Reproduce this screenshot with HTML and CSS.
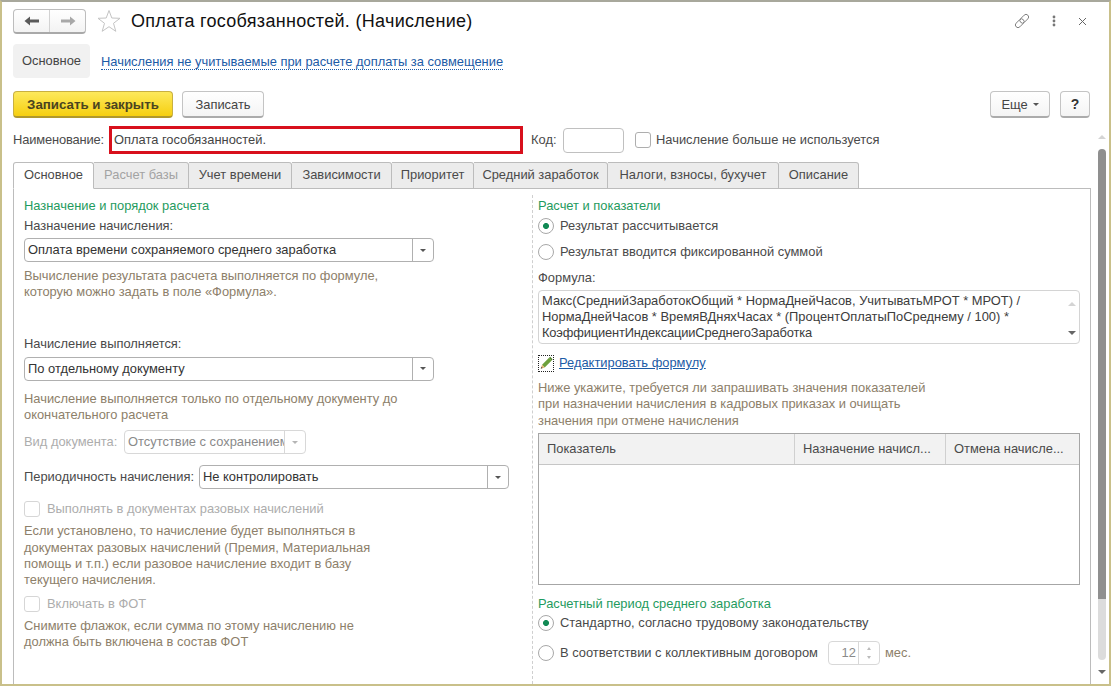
FILE: index.html
```html
<!DOCTYPE html>
<html lang="ru">
<head>
<meta charset="utf-8">
<title>Оплата гособязанностей. (Начисление)</title>
<link rel="stylesheet" href="styles.css">
</head>
<body>
<div class="window">
  <header class="titlebar">
    <div class="navgroup">
      <button class="navbtn">
        <svg width="16" height="12" viewBox="0 0 16 12"><path d="M0.5 6 L6 1.5 V4.5 H15 V7.5 H6 V10.5 Z" fill="#5a5a5a"/></svg>
      </button>
      <button class="navbtn navbtn-next">
        <svg width="16" height="12" viewBox="0 0 16 12"><path d="M15.5 6 L10 1.5 V4.5 H1 V7.5 H10 V10.5 Z" fill="#a8a8a8"/></svg>
      </button>
    </div>
    <svg class="star" width="24" height="24" viewBox="0 0 24 24"><path d="M12 1.5 L14.8 9 L23 9.3 L16.5 14.3 L18.8 22.3 L12 17.7 L5.2 22.3 L7.5 14.3 L1 9.3 L9.2 9 Z" fill="none" stroke="#c4c4c4" stroke-width="1"/></svg>
    <h1 class="title">Оплата гособязанностей. (Начисление)</h1>
    <div class="winicons">
      <svg width="16" height="16" viewBox="0 0 16 16"><g fill="none" stroke="#808080" stroke-width="1"><path d="M6.66 5.66 L10.16 2.16 A2.6 2.6 0 0 1 13.84 5.84 L10.34 9.34 A2.6 2.6 0 0 1 6.66 5.66"/><path d="M9.34 10.34 L5.84 13.84 A2.6 2.6 0 0 1 2.16 10.16 L5.66 6.66 A2.6 2.6 0 0 1 9.34 10.34"/></g></svg>
      <svg width="4" height="12" viewBox="0 0 4 12"><g fill="#777"><circle cx="2" cy="2" r="1.4"/><circle cx="2" cy="6" r="1.4"/><circle cx="2" cy="10" r="1.4"/></g></svg>
      <svg width="9" height="9" viewBox="0 0 9 9"><path d="M1 1 L8 8 M8 1 L1 8" stroke="#666" stroke-width="1" fill="none"/></svg>
    </div>
  </header>

  <nav class="sections">
    <span class="section-active">Основное</span>
    <a class="section-link">Начисления не учитываемые при расчете доплаты за совмещение</a>
  </nav>

  <div class="commandbar">
    <button class="btn btn-primary">Записать и закрыть</button>
    <button class="btn btn-save">Записать</button>
    <span class="spacer"></span>
    <button class="btn btn-more">Еще <i class="caret"></i></button>
    <button class="btn btn-help">?</button>
  </div>

  <div class="body">
    <main class="main">
      <div class="namerow">
        <label class="name-label">Наименование:</label>
        <div class="name-input">Оплата гособязанностей.</div>
        <label class="code-label">Код:</label>
        <div class="code-input"></div>
        <span class="check"></span>
        <span class="check-text">Начисление больше не используется</span>
      </div>

      <div class="tabs">
        <span class="tab tab-active t1">Основное</span>
        <span class="tab tab-disabled t2">Расчет базы</span>
        <span class="tab t3">Учет времени</span>
        <span class="tab t4">Зависимости</span>
        <span class="tab t5">Приоритет</span>
        <span class="tab t6">Средний заработок</span>
        <span class="tab t7">Налоги, взносы, бухучет</span>
        <span class="tab t8">Описание</span>
      </div>

      <div class="page">
        <section class="col-left">
          <div class="line green m1">Назначение и порядок расчета</div>
          <div class="line m4">Назначение начисления:</div>
          <div class="select select-wide m4"><span class="select-val">Оплата времени сохраняемого среднего заработка</span><span class="select-btn"><i class="caret"></i></span></div>
          <p class="hint m6">Вычисление результата расчета выполняется по формуле,<br>которую можно задать в поле «Формула».</p>
          <div class="line m35">Начисление выполняется:</div>
          <div class="select select-wide m5"><span class="select-val">По отдельному документу</span><span class="select-btn"><i class="caret"></i></span></div>
          <p class="hint m10">Начисление выполняется только по отдельному документу до<br>окончательного расчета</p>
          <div class="field-row m7">
            <span class="disabled doc-label">Вид документа:</span>
            <div class="select select-doc select-off"><span class="select-val">Отсутствие с сохранением</span><span class="select-btn"><i class="caret"></i></span></div>
          </div>
          <div class="field-row m11">
            <span class="period-label">Периодичность начисления:</span>
            <div class="select select-period"><span class="select-val">Не контролировать</span><span class="select-btn"><i class="caret"></i></span></div>
          </div>
          <div class="check-row m12"><span class="check check-off"></span><span class="disabled">Выполнять в документах разовых начислений</span></div>
          <p class="hint m6">Если установлено, то начисление будет выполняться в<br>документах разовых начислений (Премия, Материальная<br>помощь и т.п.) если разовое начисление входит в базу<br>текущего начисления.</p>
          <div class="check-row m7"><span class="check check-off"></span><span class="disabled">Включать в ФОТ</span></div>
          <p class="hint m6">Снимите флажок, если сумма по этому начислению не<br>должна быть включена в состав ФОТ</p>
        </section>

        <section class="col-right">
          <div class="line green m1">Расчет и показатели</div>
          <div class="radio-row m4"><span class="radio radio-on"></span>Результат рассчитывается</div>
          <div class="radio-row m10"><span class="radio"></span>Результат вводится фиксированной суммой</div>
          <div class="line m10">Формула:</div>
          <div class="formula m4">
            <div class="formula-text"><div>Макс(СреднийЗаработокОбщий * НормаДнейЧасов, УчитыватьМРОТ * МРОТ) /</div><div>НормаДнейЧасов * ВремяВДняхЧасах * (ПроцентОплатыПоСреднему / 100) *</div><div class="fl3">КоэффициентИндексацииСреднегоЗаработка</div></div>
            <div class="formula-scroll"><i class="tri-up"></i><i class="tri-down"></i></div>
          </div>
          <div class="edit-row m11">
            <span class="pencil"><svg width="16" height="16" viewBox="0 0 16 16"><path d="M3.5 10 L11.5 2 L14.5 5 L6.5 13 Z" fill="#6da03c"/><path d="M11.5 2 L12.8 0.8 L15.5 3.6 L14.5 5 Z" fill="#4f7d2a"/><path d="M3.5 10 L6.5 13 L2 14.5 Z" fill="#e0b070"/><path d="M2.8 12.4 L4 13.7 L2 14.5 Z" fill="#444"/></svg></span>
            <a class="edit-link">Редактировать формулу</a>
          </div>
          <p class="hint m9">Ниже укажите, требуется ли запрашивать значения показателей<br>при назначении начисления в кадровых приказах и очищать<br>значения при отмене начисления</p>
          <div class="table m4">
            <div class="thead">
              <span class="th th1">Показатель</span>
              <span class="th th2">Назначение начисл...</span>
              <span class="th th3">Отмена начисле...</span>
            </div>
          </div>
          <div class="line green m11">Расчетный период среднего заработка</div>
          <div class="radio-row m3"><span class="radio radio-on"></span>Стандартно, согласно трудовому законодательству</div>
          <div class="radio-row radio-row-spin m10">
            <span class="radio"></span>В соответствии с коллективным договором
            <div class="spin"><span class="spin-val">12</span><span class="spin-btns"><i class="tri-up tiny"></i><i class="tri-down tiny"></i></span></div>
            <span class="months">мес.</span>
          </div>
        </section>
      </div>
    </main>
    <aside class="scrollbar">
      <i class="tri-up"></i>
      <span class="thumb"></span>
      <i class="tri-down dark"></i>
    </aside>
  </div>
</div>
</body>
</html>
```

FILE: styles.css
```css
* { box-sizing: border-box; }
html, body { margin: 0; padding: 0; }
body {
  width: 1111px;
  height: 686px;
  overflow: hidden;
  background: #fff;
  font-family: "Liberation Sans", Arial, sans-serif;
  font-size: 12.9px;
  line-height: 16px;
  color: #4a4a4a;
}
.window {
  width: 1111px;
  height: 686px;
  background: #fff;
  border-left: 2px solid #c9c08a;
  border-right: 2px solid #c9c08a;
  border-bottom: 2px solid #c9c08a;
  border-top: 2px solid #a8a89c;
  padding-left: 11px;
  display: flex;
  flex-direction: column;
  overflow: hidden;
}
button { font-family: inherit; font-size: inherit; color: inherit; padding: 0; margin: 0; }
p { margin: 0; }
h1 { margin: 0; font-weight: 400; }
i { display: block; }

/* title bar */
.titlebar { display: flex; align-items: center; height: 24px; margin-top: 7px; }
.navgroup {
  display: flex;
  width: 73px;
  height: 25px;
  border: 1px solid #bdbdbd;
  border-bottom: 2px solid #a9a9a9;
  border-radius: 4px;
  background: linear-gradient(#fff, #f3f3f3);
}
.navbtn {
  flex: 1;
  border: 0;
  background: none;
  display: flex;
  align-items: center;
  justify-content: center;
}
.navbtn-next { border-left: 1px solid #d2d2d2; }
.star { margin-left: 11px; }
.title { margin-left: 10px; font-size: 18px; letter-spacing: 0.3px; line-height: 24px; color: #111; white-space: nowrap; }
.winicons {
  margin-left: auto;
  margin-right: 22px;
  display: flex;
  align-items: center;
  gap: 22px;
}

/* sections */
.sections { display: flex; align-items: center; height: 34px; margin-top: 11px; }
.section-active {
  width: 77px;
  height: 34px;
  line-height: 34px;
  text-align: center;
  background: #f1f1f1;
  border-radius: 4px;
  color: #444;
}
.section-link {
  margin-left: 11px;
  margin-top: 2px;
  color: #1c5ba6;
  border-bottom: 1px dotted #1c5ba6;
  line-height: 14px;
}

/* command bar */
.commandbar { display: flex; align-items: center; height: 27px; margin-top: 13px; padding-right: 19px; }
.spacer { flex: 1; }
.btn {
  height: 27px;
  border: 1px solid #c4c4c4;
  border-bottom: 2px solid #ababab;
  border-radius: 4px;
  background: linear-gradient(#fff, #f4f4f4);
  color: #444;
}
.btn-primary {
  width: 160px;
  margin-right: 9px;
  font-weight: 700;
  font-size: 13.3px;
  color: #4a4420;
  background: linear-gradient(#fde95c, #f6cf10);
  border-color: #c9b040;
  border-bottom-color: #b0982c;
}
.btn-save { width: 82px; }
.btn-more { width: 60px; margin-right: 10px; display: flex; align-items: center; justify-content: center; gap: 5px; }
.btn-help { width: 30px; font-size: 14px; font-weight: 700; color: #333; }
.caret {
  width: 0;
  height: 0;
  border-left: 3px solid transparent;
  border-right: 3px solid transparent;
  border-top: 3px solid #555;
}

/* body */
.body { flex: 1; display: flex; min-height: 0; margin-top: 8px; }
.main { width: 1078px; display: flex; flex-direction: column; min-height: 0; }
.namerow { display: flex; align-items: center; height: 28px; flex: none; }
.name-label { width: 96px; white-space: nowrap; letter-spacing: -0.15px; }
.name-input {
  width: 414px;
  height: 28px;
  border: 3px solid #d8101c;
  line-height: 22px;
  padding-left: 2px;
  color: #444;
}
.code-label { margin-left: 8px; width: 32px; }
.code-input { width: 61px; height: 25px; border: 1px solid #c0c0c0; border-radius: 4px; }
.check {
  flex: none;
  width: 16px;
  height: 16px;
  border: 1px solid #aeaeae;
  border-radius: 3px;
  margin-left: 11px;
  margin-right: 5px;
}
.check-text { white-space: nowrap; }

/* tabs */
.tabs { display: flex; height: 27px; margin-top: 8px; flex: none; position: relative; z-index: 1; }
.tab {
  height: 27px;
  line-height: 24px;
  text-align: center;
  background: #ececec;
  border: 1px solid #bcbcbc;
  border-left-width: 0;
  border-radius: 0 3px 0 0;
  white-space: nowrap;
}
.tab-active {
  background: #fff;
  border-left-width: 1px;
  border-bottom-color: #fff;
  border-radius: 3px 3px 0 0;
}
.tab-disabled { color: #a3a3a3; }
.t1 { width: 81px; }
.t2 { width: 95px; }
.t3 { width: 103px; }
.t4 { width: 100px; }
.t5 { width: 82px; }
.t6 { width: 134px; }
.t7 { width: 171px; letter-spacing: 0.05px; }
.t8 { width: 80px; }

.page {
  flex: 1;
  min-height: 0;
  margin-top: -1px;
  border-left: 1px solid #bcbcbc;
  border-right: 1px solid #bcbcbc;
  border-top: 1px solid #bcbcbc;
  display: flex;
  padding-top: 8px;
  overflow: hidden;
}
.col-left { width: 518px; padding-left: 10px; flex: none; }
.col-right {
  width: 558px;
  flex: none;
  margin-top: -2px;
  padding-top: 2px;
  padding-left: 5px;
  padding-right: 9px;
  border-left: 1px dashed #cfcfcf;
}

.line { height: 16px; white-space: nowrap; }
.green { color: #1f9b5e; }
.disabled { color: #adadad; white-space: nowrap; }
.hint { color: #8d806a; line-height: 16.33px; white-space: nowrap; }

.m1 { margin-top: 1px; }
.m3 { margin-top: 3px; }
.m4 { margin-top: 4px; }
.m5 { margin-top: 5px; }
.m6 { margin-top: 6px; }
.m7 { margin-top: 7px; }
.m9 { margin-top: 9px; }
.m10 { margin-top: 10px; }
.m11 { margin-top: 11px; }
.m12 { margin-top: 12px; }
.m35 { margin-top: 35px; }

/* selects */
.select {
  display: flex;
  height: 24px;
  border: 1px solid #b0b0b0;
  border-radius: 4px;
  background: #fff;
  color: #333;
  overflow: hidden;
}
.select-val { flex: 1; min-width: 0; overflow: hidden; white-space: nowrap; padding-left: 3px; line-height: 22px; }
.select-btn {
  flex: none;
  width: 21px;
  border-left: 1px solid #b0b0b0;
  display: flex;
  align-items: center;
  justify-content: center;
}
.select-wide { width: 410px; }
.select-doc { width: 182px; }
.select-period { width: 310px; }
.select-off { border-color: #d8d8d8; color: #8a8a8a; }
.select-off .select-btn { border-left-color: #d8d8d8; }
.select-off .caret { border-top-color: #b5b5b5; }
.field-row { display: flex; align-items: center; height: 24px; }
.doc-label { width: 100px; }
.period-label { width: 175px; white-space: nowrap; }
.check-row { display: flex; align-items: center; height: 16px; }
.check-off { margin-left: 0; border-color: #d6d6d6; margin-right: 7px; }

/* radios */
.radio-row { display: flex; align-items: center; height: 16px; white-space: nowrap; }
.radio-row-spin { height: 24px; }
.radio {
  flex: none;
  width: 16px;
  height: 16px;
  border-radius: 50%;
  border: 1px solid #a8a8a8;
  margin-right: 6px;
  background: #fff;
}
.radio-on { background: radial-gradient(circle, #128a55 0 2.6px, #fff 3.4px); }

/* formula */
.formula {
  display: flex;
  width: 542px;
  height: 54px;
  border: 1px solid #d4d4d4;
  border-radius: 4px;
  position: relative;
}
.formula-text { flex: 1; padding: 2px 0 0 3px; white-space: nowrap; color: #3c3c3c; }
.fl3 { letter-spacing: -0.16px; }
.formula-scroll {
  width: 14px;
  display: flex;
  flex-direction: column;
  justify-content: space-between;
  align-items: center;
  padding: 11px 0 8px;
}
.tri-up {
  width: 0; height: 0;
  border-left: 4px solid transparent;
  border-right: 4px solid transparent;
  border-bottom: 4px solid #d4d4d4;
}
.tri-down {
  width: 0; height: 0;
  border-left: 4px solid transparent;
  border-right: 4px solid transparent;
  border-top: 4px solid #666;
}
.tiny { border-left-width: 2.5px; border-right-width: 2.5px; }
.tiny.tri-up { border-bottom-width: 3px; border-bottom-color: #bbb; }
.tiny.tri-down { border-top-width: 3px; border-top-color: #bbb; }

.edit-row { display: flex; align-items: center; height: 16px; }
.pencil {
  width: 16px;
  height: 17px;
  border: 1px dotted #222;
  margin-right: 5px;
  display: flex;
  align-items: center;
  justify-content: center;
  overflow: hidden;
  flex: none;
}
.edit-link { color: #1c5ba6; text-decoration: underline; }

/* table */
.table { width: 542px; height: 152px; border: 1px solid #a6a6a6; }
.thead { display: flex; height: 31px; background: #f2f2f2; border-bottom: 1px solid #c6c6c6; }
.th { line-height: 30px; padding-left: 8px; white-space: nowrap; overflow: hidden; }
.th1 { width: 255px; }
.th2 { width: 151px; border-left: 1px solid #d0d0d0; padding-left: 8px; }
.th3 { flex: 1; border-left: 1px solid #d0d0d0; }

/* spinner */
.spin {
  display: flex;
  width: 52px;
  height: 24px;
  border: 1px solid #d8d8d8;
  border-radius: 4px;
  margin-left: 10px;
  color: #8a8a8a;
}
.spin-val { flex: 1; text-align: right; padding-right: 2px; line-height: 22px; }
.spin-btns {
  width: 21px;
  border-left: 1px solid #d8d8d8;
  display: flex;
  flex-direction: column;
  align-items: center;
  justify-content: center;
  gap: 6px;
}
.months { margin-left: 5px; color: #8d806a; }

/* scrollbar */
.scrollbar {
  width: 14px;
  margin-left: 4px;
  display: flex;
  flex-direction: column;
  align-items: center;
  padding: 9px 0 10px;
  gap: 10px;
}
.thumb { flex: 1; width: 8px; background: linear-gradient(#8f8f8f 0 88%, #dcdcdc 88%); border-radius: 4px; }
.tri-down.dark { border-top-color: #666; }
```
